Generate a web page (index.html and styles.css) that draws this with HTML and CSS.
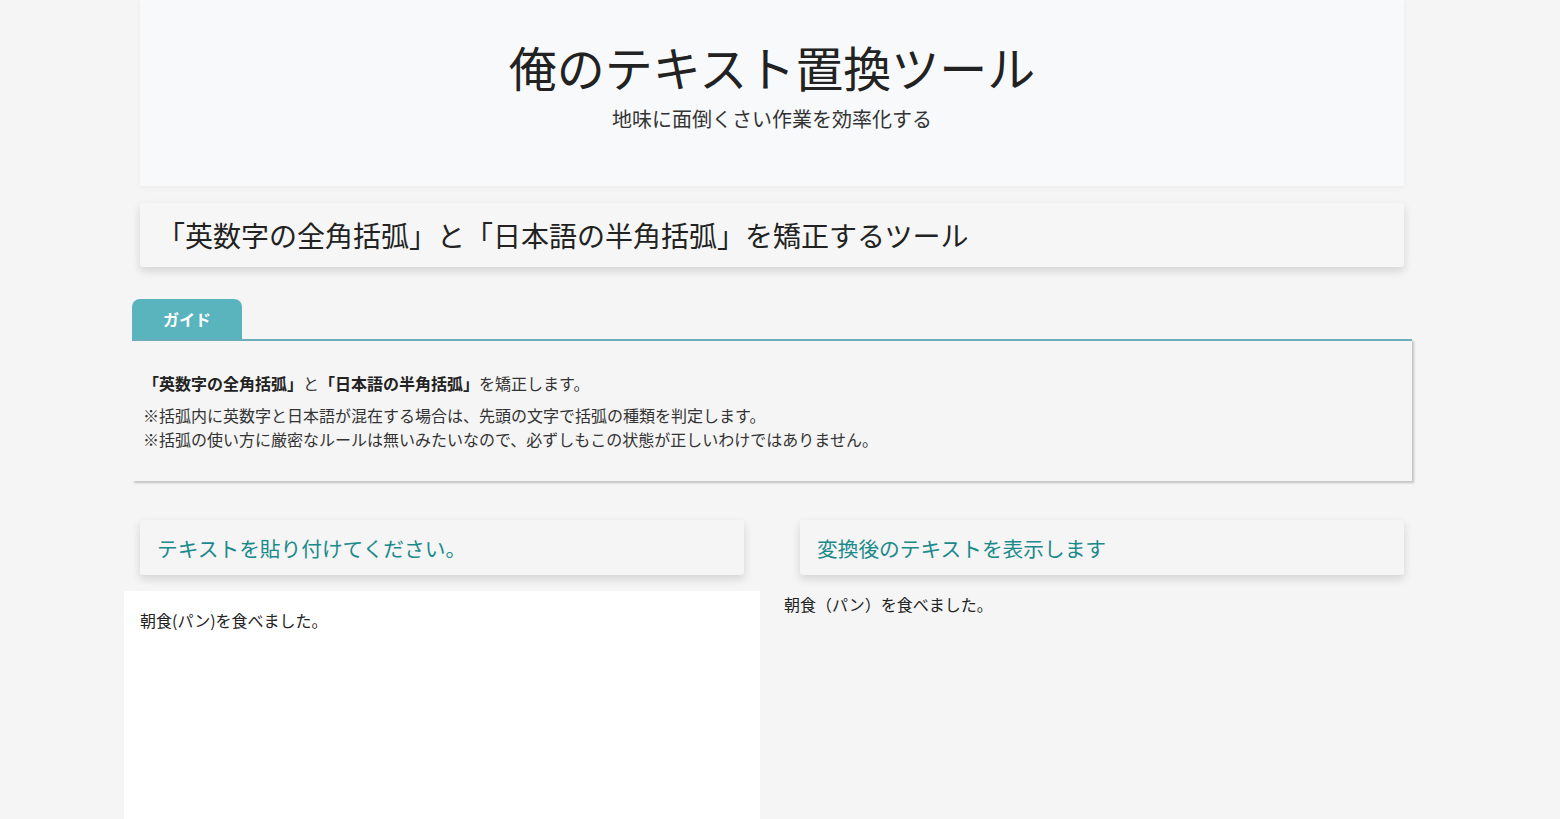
FILE: index.html
```html
<!DOCTYPE html>
<html lang="ja">
<head>
    <meta charset="UTF-8">
    <meta name="viewport" content="width=device-width, initial-scale=1.0">
    <title>俺のテキスト置換ツール</title>
    <link rel="stylesheet" href="styles.css">
</head>
<body>
    <div class="wrapper">
        <header class="site-header">
            <h1>俺のテキスト置換ツール</h1>
            <p class="tagline">地味に面倒くさい作業を効率化する</p>
        </header>

        <div class="tool-title">
            <h2>「英数字の全角括弧」と「日本語の半角括弧」を矯正するツール</h2>
        </div>

        <div class="tabs">
            <div class="tab active">ガイド</div>
        </div>
        <div class="guide">
            <p class="lead"><strong>「英数字の全角括弧」</strong>と<strong>「日本語の半角括弧」</strong>を矯正します。</p>
            <p>※括弧内に英数字と日本語が混在する場合は、先頭の文字で括弧の種類を判定します。<br>
            ※括弧の使い方に厳密なルールは無いみたいなので、必ずしもこの状態が正しいわけではありません。</p>
        </div>

        <div class="columns">
            <div class="column">
                <div class="col-head">テキストを貼り付けてください。</div>
                <textarea id="input" class="input">朝食(パン)を食べました。</textarea>
            </div>
            <div class="column">
                <div class="col-head">変換後のテキストを表示します</div>
                <div id="output" class="output">朝食（パン）を食べました。</div>
            </div>
        </div>
    </div>
</body>
</html>
```

FILE: styles.css
```css
body {
    font-family: "Noto Sans CJK JP", "Noto Sans", sans-serif;
    background-color: #f5f5f5;
    margin: 0;
    padding: 0 16px 0 0;
    color: #222;
}
.wrapper {
    max-width: 1296px;
    margin: 0 auto;
}
.site-header {
    margin: 0 16px;
    height: 186px;
    background-color: #f7f9fb;
    box-shadow: 0 2px 6px rgba(0, 0, 0, 0.04);
    text-align: center;
    padding-top: 34px;
    box-sizing: border-box;
}
.site-header h1 {
    margin: 0;
    font-size: 48px;
    font-weight: 400;
    line-height: 64px;
    color: #222;
}
.tagline {
    margin: 6px 0 0;
    font-size: 20px;
    line-height: 30px;
    color: #333;
}
.tool-title {
    margin: 17px 16px 0;
    height: 64px;
    background-color: #f6f6f6;
    border-radius: 3px;
    box-shadow: 0 4px 10px rgba(0, 0, 0, 0.14);
    display: flex;
    align-items: center;
    padding-left: 17px;
}
.tool-title h2 {
    margin: 0;
    font-size: 28px;
    font-weight: 400;
    color: #222;
}
.tabs {
    margin: 32px 8px 0;
    display: flex;
}
.tab {
    width: 110px;
    height: 40px;
    line-height: 40px;
    text-align: center;
    background-color: #5ab4bd;
    color: #fff;
    font-weight: 700;
    font-size: 16px;
    border-radius: 8px 8px 0 0;
}
.guide {
    margin: 0 8px;
    border-top: 2px solid #6aaebb;
    background-color: #f5f5f5;
    box-shadow: 2px 2px 2px #c4c4c4;
    padding: 30px 11px 30px;
    font-size: 16px;
    color: #333;
}
.guide p {
    margin: 0;
    line-height: 24px;
}
.guide .lead {
    margin-bottom: 8px;
}
.guide strong {
    color: #222;
}
.columns {
    display: grid;
    grid-template-columns: 1fr 1fr;
    gap: 24px;
    margin-top: 39px;
}
.col-head {
    margin: 0 16px;
    height: 55px;
    background-color: #f5f5f5;
    border-radius: 3px;
    box-shadow: 0 4px 10px rgba(0, 0, 0, 0.14);
    display: flex;
    align-items: center;
    padding-left: 17px;
    font-size: 20.7px;
    color: #1a8a8a;
}
.input {
    display: block;
    width: 100%;
    height: 260px;
    margin-top: 16px;
    border: none;
    outline: none;
    resize: none;
    background-color: #fff;
    padding: 17px 16px;
    box-sizing: border-box;
    font-family: inherit;
    font-size: 16px;
    line-height: 24px;
    color: #222;
}
.output {
    padding: 17px 0 0 0;
    font-size: 16px;
    line-height: 24px;
    color: #222;
}
```
